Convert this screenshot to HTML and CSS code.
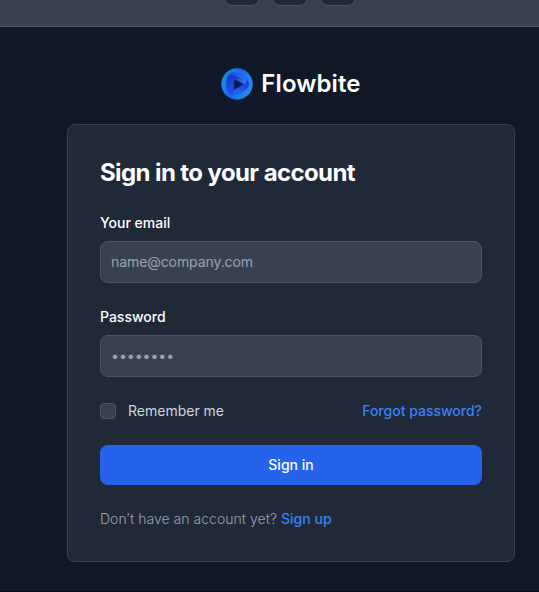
FILE: index.html
```html
<!DOCTYPE html>
<html lang="en">
<head>
<meta charset="utf-8">
<title>Sign in to your account</title>
<link rel="stylesheet" href="styles.css">
</head>
<body>
<header class="toolbar">
  <button class="tool" aria-label="Desktop"></button>
  <button class="tool" aria-label="Tablet"></button>
  <button class="tool" aria-label="Mobile"></button>
</header>
<main class="page">
  <a class="brand" href="#">
    <svg class="logo" viewBox="0 0 32 32" aria-hidden="true">
      <defs>
        <linearGradient id="ring" x1="0" y1="0.3" x2="1" y2="0.7">
          <stop offset="0" stop-color="#0f94f0"/>
          <stop offset="0.45" stop-color="#1b68ea"/>
          <stop offset="1" stop-color="#1f92f2"/>
        </linearGradient>
        <linearGradient id="top" x1="0" y1="0" x2="1" y2="0.4">
          <stop offset="0" stop-color="#1a45d6"/>
          <stop offset="1" stop-color="#2a78f5"/>
        </linearGradient>
        <linearGradient id="side" x1="0" y1="0" x2="0.3" y2="1">
          <stop offset="0" stop-color="#1735c8"/>
          <stop offset="1" stop-color="#1c58e8"/>
        </linearGradient>
        <linearGradient id="base" x1="0" y1="0.8" x2="1" y2="0">
          <stop offset="0" stop-color="#2565f2"/>
          <stop offset="1" stop-color="#1834cc"/>
        </linearGradient>
      </defs>
      <circle cx="16" cy="16" r="15.700" fill="url(#ring)"/>
      <path d="M5.500 9C8 4 14 3 19 5.500L26 9.500C30 12 30.500 17 27 20L23 17.500C24 16 23 14.500 21 13.500L13 9.500Z" fill="url(#top)"/>
      <path d="M5.500 11C7 6.500 12 6 16 8.500L22 12C17 10.500 13 10.500 12.500 15V28C8 27 5 23 5 17Z" fill="url(#side)"/>
      <path d="M12.500 24C13 22.500 15 21.500 17 20.500L22.500 17.300C25 15.500 26 14 25.500 11.500C29 15 28.500 19 24.500 21.800L18 25.700C15.500 27.300 12.500 28 12.500 24Z" fill="url(#base)"/>
      <path d="M12.500 22.500V14C12.500 11.800 14 10.800 16 11.900L22.500 15.500C23.500 16.200 23.500 16.800 22.500 17.300Z" fill="#112d9e"/>
      <path d="M13.500 12.300L21.700 16.200L13.500 20.800Z" fill="#0c173b"/>
    </svg>
    <span>Flowbite</span>
  </a>
  <section class="card">
    <h1>Sign in to your account</h1>
    <form class="form">
      <div class="field">
        <label for="email">Your email</label>
        <input class="text-input" type="email" id="email" placeholder="name@company.com">
      </div>
      <div class="field">
        <label for="password">Password</label>
        <input class="text-input" type="password" id="password" placeholder="••••••••">
      </div>
      <div class="options">
        <label class="remember"><input class="checkbox" type="checkbox"><span>Remember me</span></label>
        <a class="link" href="#">Forgot password?</a>
      </div>
      <button class="submit" type="button">Sign in</button>
      <p class="signup">Don’t have an account yet? <a class="link" href="#">Sign up</a></p>
    </form>
  </section>
</main>
</body>
</html>
```
FILE: styles.css
```css
* { box-sizing: border-box; }
body {
  margin: 0;
  height: 592px;
  overflow: hidden;
  background: #111827;
  color: #fff;
  font: 14px/20px Inter, sans-serif;
  border-bottom: 1px solid #080b14;
}
input, button { font: inherit; }
.toolbar {
  height: 27px;
  display: flex;
  align-items: flex-start;
  gap: 12px;
  padding-left: 224px;
  background: #374151;
  border-bottom: 1px solid #4b5563;
}
.tool {
  width: 36px;
  height: 34px;
  margin-top: -28px;
  padding: 0;
  background: #1f2937;
  border: 1px solid #4b5563;
  border-radius: 8px;
}
.page {
  display: flex;
  flex-direction: column;
  align-items: center;
  padding: 41px 0 0 43px;
}
.brand {
  display: flex;
  align-items: center;
  height: 32px;
  margin-bottom: 24px;
  color: #fff;
  font-size: 24px;
  line-height: 32px;
  font-weight: 600;
  letter-spacing: 0.1px;
  text-decoration: none;
}
.logo { width: 32px; height: 32px; margin-right: 8px; }
.card {
  width: 448px;
  padding: 32px;
  background: #1f2937;
  border: 1px solid #374151;
  border-radius: 8px;
}
h1 {
  margin: 0 0 24px;
  font-size: 24px;
  line-height: 32px;
  font-weight: 700;
  letter-spacing: -0.6px;
}
.form { display: flex; flex-direction: column; gap: 24px; }
.field { display: flex; flex-direction: column; gap: 8px; font-weight: 500; }
.text-input {
  width: 100%;
  height: 42px;
  padding: 9px 10px 11px;
  background: #374151;
  border: 1px solid #4b5563;
  border-radius: 8px;
  color: #fff;
  font-weight: 400;
}
.text-input::placeholder { color: #9ca3af; opacity: 1; }
.text-input[type="email"] { letter-spacing: -0.08px; }
.options { display: flex; align-items: center; justify-content: space-between; }
.remember { display: flex; align-items: center; gap: 12px; color: #d1d5db; }
.checkbox {
  appearance: none;
  width: 16px;
  height: 16px;
  margin: 0;
  background: #374151;
  border: 1px solid #4b5563;
  border-radius: 4px;
}
.link { color: #3b82f6; font-weight: 500; text-decoration: none; }
.submit {
  height: 40px;
  padding: 0;
  background: #2563eb;
  border: 0;
  border-radius: 8px;
  color: #fff;
  font-weight: 500;
}
.signup { margin: 0; color: #9ca3af; font-weight: 300; letter-spacing: 0.03px; }
```
